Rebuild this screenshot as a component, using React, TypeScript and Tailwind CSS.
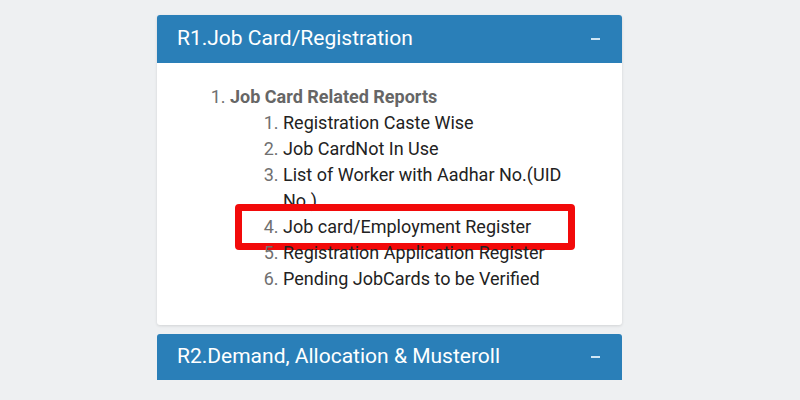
import React from 'react';

const jobCardReports = [
  'Registration Caste Wise',
  'Job CardNot In Use',
  'List of Worker with Aadhar No.(UID No.)',
  'Job card/Employment Register',
  'Registration Application Register',
  'Pending JobCards to be Verified',
];

function PanelHeader({ title, h }: { title: string; h: string }) {
  return (
    <div className={`flex ${h} items-center justify-between rounded-t-[3px] bg-[#2a7fb8] pl-[20px] pr-[22px]`}>
      <span className="text-[21px] text-white">{title}</span>
      <span className="block h-[2px] w-[9px] bg-[#cfe6f5]" />
    </div>
  );
}

export default function App() {
  return (
    <div
      className="h-[400px] w-[800px] overflow-hidden bg-[#eef0f2] pt-[15px]"
      style={{ fontFamily: 'Roboto, "Liberation Sans", sans-serif' }}
    >
      <div className="ml-[157px] w-[465px]">
        {/* R1 panel */}
        <div className="rounded-[3px] bg-white shadow-[0_1px_3px_rgba(0,0,0,0.12)]">
          <PanelHeader title="R1.Job Card/Registration" h="h-[48px]" />
          <div className="pb-[33px] pl-[73px] pr-[36px] pt-[21px] text-[18px] leading-[26px]">
            <ol className="list-decimal marker:text-[#707070]">
              <li>
                <span className="font-bold text-[#666]">Job Card Related Reports</span>
                <ol className="list-decimal pl-[53px]">
                  {jobCardReports.map((r, i) => (
                    <li key={r} className="relative text-[#222]">
                      {r}
                      {i === 3 && (
                        <span className="absolute left-[-48px] top-[-10px] h-[46px] w-[340px] rounded-[4px] border-[7px] border-[#f20a0a]" />
                      )}
                    </li>
                  ))}
                </ol>
              </li>
            </ol>
          </div>
        </div>

        {/* R2 panel */}
        <div className="mt-[9px]">
          <PanelHeader title="R2.Demand, Allocation & Musteroll" h="h-[46px]" />
        </div>
      </div>
    </div>
  );
}
